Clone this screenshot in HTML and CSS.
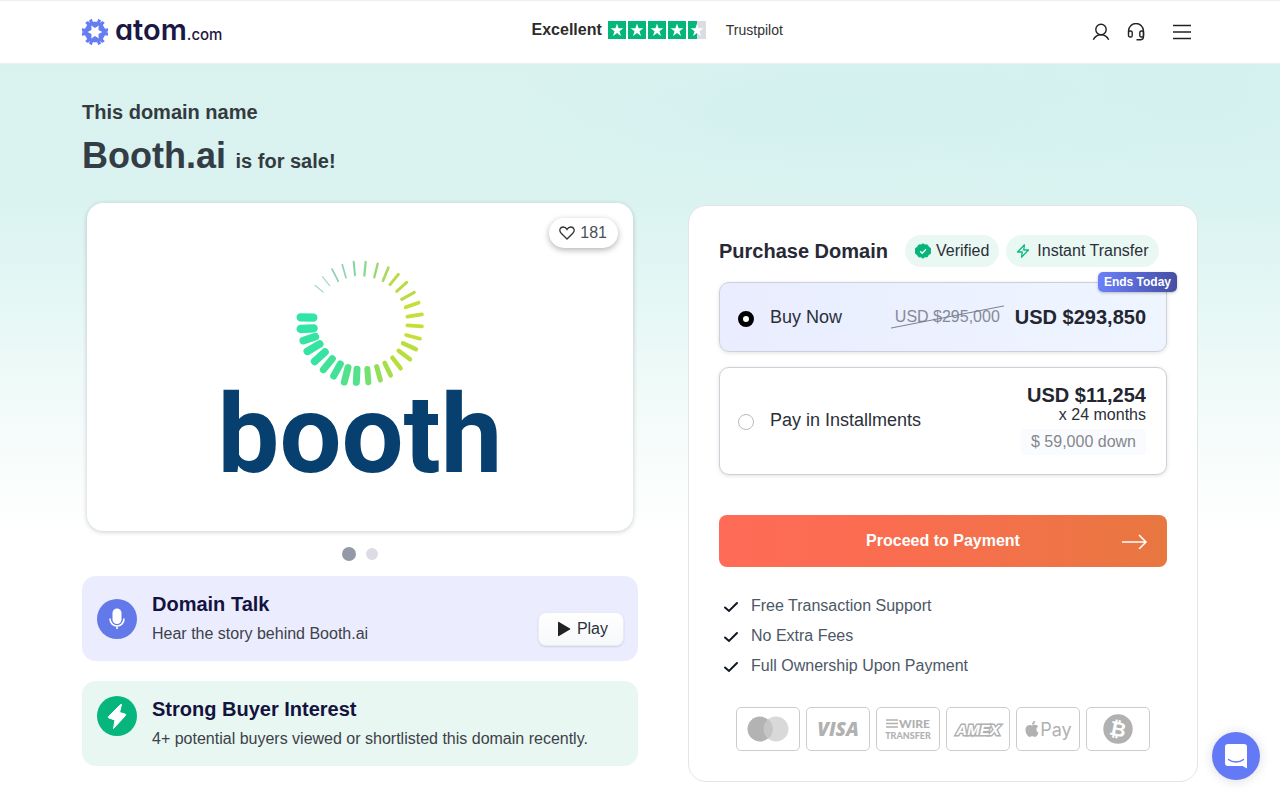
FILE: index.html
```html
<!DOCTYPE html>
<html lang="en">
<head>
<meta charset="utf-8">
<meta name="viewport" content="width=device-width, initial-scale=1">
<title>Booth.ai is for sale</title>
<link rel="stylesheet" href="styles.css">
</head>
<body>
<header class="site-header">
  <div class="container header-row">
    <a class="brand" href="#" aria-label="atom.com">
      <svg class="brand-mark" viewBox="-14 -14 28 28" width="28" height="28" fill="#667cf3" aria-hidden="true">
        <defs><path id="petal" d="M-6-11.600-4.600-7 0-4 4.600-7 6-11.600 3.200-13.200 2.200-10.300H-2.200L-3.200-13.200Z"/></defs>
        <use href="#petal"/><use href="#petal" transform="rotate(60)"/><use href="#petal" transform="rotate(120)"/>
        <use href="#petal" transform="rotate(180)"/><use href="#petal" transform="rotate(240)"/><use href="#petal" transform="rotate(300)"/>
      </svg>
      <span class="brand-name">atom</span><span class="brand-tld">.com</span>
    </a>
    <div class="trust">
      <strong>Excellent</strong>
      <svg class="stars" viewBox="0 0 98 18" width="98" height="18" role="img" aria-label="4.5 stars">
        <defs><path id="star" d="M9 2.600 10.600 7.300H15.400L11.500 10.200 13 15 9 12.100 5 15 6.500 10.200 2.600 7.300H7.400Z" fill="#fff"/></defs>
        <path fill="#04b67a" d="M0 0h18v18H0zM20 0h18v18H20zM40 0h18v18H40zM60 0h18v18H60zM80 0h9v18h-9z"/>
        <path fill="#dcdce6" d="M89 0h9v18h-9z"/>
        <use href="#star"/><use href="#star" x="20"/><use href="#star" x="40"/><use href="#star" x="60"/><use href="#star" x="80"/>
      </svg>
      <a class="trust-link" href="#">Trustpilot</a>
    </div>
    <nav class="tools" aria-label="Account">
      <button class="icon-button" aria-label="Account">
        <svg viewBox="0 0 18 18" width="18" height="18"><circle cx="9" cy="6.500" r="5.200"/><path d="M1.300 16.800C2.800 13.500 5.500 11.700 9 11.700s6.200 1.800 7.700 5.100"/></svg>
      </button>
      <button class="icon-button" aria-label="Support">
        <svg viewBox="0 0 18 18" width="18" height="18"><path d="M1.500 9.500V8a7.200 7.200 0 0 1 15 0v5.500c0 2-1.300 3.200-3.200 3.200H9.500"/><rect x="1.500" y="8" width="3.700" height="6" rx="1.600"/><rect x="12.800" y="8" width="3.700" height="6" rx="1.600"/></svg>
      </button>
      <button class="icon-button menu" aria-label="Menu">
        <svg viewBox="0 0 20 18" width="20" height="18"><path d="M1 2.500h18M1 9h18M1 15.500h18"/></svg>
      </button>
    </nav>
  </div>
</header>

<main class="container">
  <h1 class="headline">
    <span class="lead">This domain name</span>
    <span><span class="domain">Booth.ai</span> <span class="tail">is for sale!</span></span>
  </h1>

  <div class="columns">
    <section class="showcase">
      <div class="logo-card">
        <button class="likes" aria-label="181 likes">
          <svg viewBox="0 0 16 14" width="16" height="14" aria-hidden="true"><path d="M8 13 2.200 7.300C-.5 4.300 1.200 1 4.200 1 6 1 7.200 2 8 3.400 8.800 2 10 1 11.800 1c3 0 4.700 3.300 2 6.300Z"/></svg>
          <span>181</span>
        </button>
        <svg class="burst" viewBox="285 58 390 384" width="130" height="128" fill="none" stroke-linecap="round" aria-hidden="true">
          <g stroke="#30e5a6" stroke-width="25"><path d="M340 234 302 233M341 266 302 268"/></g>
          <g stroke="#35e4a2" stroke-width="23"><path d="M346 291 310 303M359 313 322 335M375 337 344 365"/></g>
          <g stroke="#40e298" stroke-width="21"><path d="M397 357 370 390M421 373 401 409"/></g>
          <g stroke="#54e18c" stroke-width="21"><path d="M444 384 433 427M471 389 469 428"/></g>
          <path stroke="#74e06f" stroke-width="18" d="M502 388 505 428"/>
          <path stroke="#92df58" stroke-width="15" d="M530 381 541 421"/>
          <path stroke="#a6de4a" stroke-width="14" d="M554 370 572 407"/>
          <g stroke="#b8de3c" stroke-width="13"><path d="M577 354 602 386M596 333 630 359M609 311 648 329"/></g>
          <g stroke="#c4df35" stroke-width="11"><path d="M618 286 660 297M622 257 666 260M622 231 666 224M617 203 656 189"/></g>
          <g stroke="#badb43" stroke-width="9"><path d="M605 179 643 158M590 155 620 128M570 135 595 104"/></g>
          <path stroke="#a9d95f" stroke-width="8" d="M549 123 565 84"/>
          <path stroke="#99d776" stroke-width="7" d="M523 113 533 72"/>
          <path stroke="#8cd990" stroke-width="7" d="M493 108 497 67"/>
          <path stroke="#86d4a2" stroke-width="6" d="M465 107 461 66"/>
          <path stroke="#8dd3b0" stroke-width="5" d="M438 114 427 75M415 125 396 88"/>
          <path stroke="#a9dcc7" stroke-width="4" d="M389 138 367 111M369 157 345 137"/>
        </svg>
        <div class="wordmark">booth</div>
      </div>
      <div class="dots">
        <button class="dot active" aria-label="Slide 1"></button>
        <button class="dot" aria-label="Slide 2"></button>
      </div>
      <article class="info talk">
        <svg class="info-icon" viewBox="0 0 40 40" width="40" height="40" aria-hidden="true"><circle cx="20" cy="20" r="20" fill="#6379ea"/><rect x="15.500" y="9.500" width="9" height="15.500" rx="4.500" fill="#fff"/><path d="M13 19.500c0 10 14 10 14 0M20 27v3" fill="none" stroke="#fff" stroke-width="1.600"/></svg>
        <div class="info-text"><h2>Domain Talk</h2><p>Hear the story behind Booth.ai</p></div>
        <button class="play"><svg viewBox="0 0 14 16" width="14" height="16" aria-hidden="true"><path d="M1 1.500v13q0 1 1 .5L13 8.600q.8-.6 0-1.200L2 1Q1 .5 1 1.500Z"/></svg>Play</button>
      </article>
      <article class="info interest">
        <svg class="info-icon" viewBox="0 0 40 40" width="40" height="40" aria-hidden="true"><circle cx="20" cy="20" r="20" fill="#06b67c"/><path d="M23.500 8.500 11.500 20.500q-1 1 .5 1.500l6 2-1.500 8.500L28.500 19.500q.8-1-.5-1.500l-5.500-1.500L24.500 8.500Z" fill="#fff" stroke="#fff" stroke-linejoin="round"/></svg>
        <div class="info-text"><h2>Strong Buyer Interest</h2><p>4+ potential buyers viewed or shortlisted this domain recently.</p></div>
      </article>
    </section>

    <form class="purchase">
      <div class="purchase-head">
        <h2>Purchase Domain</h2>
        <div class="pills">
          <span class="pill"><svg viewBox="0 0 16 16" width="16" height="16" aria-hidden="true"><path fill="#07b47b" stroke="#07b47b" stroke-linejoin="round" d="M8 .8 10 2l2.400-.1 1.100 2.100 2 1.300L15.400 8l.1 2.500-2.100 1.200-1.200 2.200-2.400-.1L8 15.200l-2-1.400-2.400.1-1.100-2.200L.5 10.500.6 8 .5 5.400l2.100-1.300L3.700 1.900 6 2Z"/><path d="m5.200 8.300 2 2 3.800-4" fill="none" stroke="#fff" stroke-width="1.300"/></svg>Verified</span>
          <span class="pill transfer"><svg viewBox="0 0 16 16" width="16" height="16" aria-hidden="true"><path d="M9.500 1.800 2.500 9H7.300L6.500 14.200 13.500 7H8.700Z" fill="none" stroke="#10b981" stroke-width="1.300" stroke-linejoin="round"/></svg>Instant Transfer</span>
        </div>
      </div>

      <label class="option selected">
        <input type="radio" name="plan" checked>
        <span class="option-name">Buy Now</span>
        <span class="price-row">
          <span class="old-price">USD $295,000<svg class="slash" viewBox="0 0 113 26" preserveAspectRatio="none" aria-hidden="true"><path d="M0 25 113 1"/></svg></span>
          <strong>USD $293,850</strong>
        </span>
        <span class="badge">Ends Today</span>
      </label>

      <label class="option installments">
        <input type="radio" name="plan">
        <span class="option-name">Pay in Installments</span>
        <span class="price-stack"><strong>USD $11,254</strong><span>x 24 months</span><span class="down">$ 59,000 down</span></span>
      </label>

      <button class="proceed" type="button">
        <span>Proceed to Payment</span>
        <svg viewBox="0 0 27 16" width="27" height="16" aria-hidden="true"><path d="M1 9h24M18 2l7 7-7 7"/></svg>
      </button>

      <ul class="benefits">
        <li><svg viewBox="0 0 16 14" width="16" height="14" aria-hidden="true"><path d="m2 8.500 4 3.500L14 4"/></svg>Free Transaction Support</li>
        <li><svg viewBox="0 0 16 14" width="16" height="14" aria-hidden="true"><path d="m2 8.500 4 3.500L14 4"/></svg>No Extra Fees</li>
        <li><svg viewBox="0 0 16 14" width="16" height="14" aria-hidden="true"><path d="m2 8.500 4 3.500L14 4"/></svg>Full Ownership Upon Payment</li>
      </ul>

      <div class="methods">
        <span class="method" aria-label="Mastercard"><svg viewBox="0 0 42 26" width="42" height="26"><circle cx="29" cy="13" r="12.500" fill="#d9d9d9"/><circle cx="13" cy="13" r="12.500" fill="#b3b3b3"/><path d="M21 3.400a12.500 12.500 0 0 1 0 19.200 12.500 12.500 0 0 1 0-19.200Z" fill="#c6c6c6"/></svg></span>
        <span class="method visa">VISA</span>
        <span class="method wire"><span class="wire-top"><svg viewBox="0 0 12 9" width="12" height="9" aria-hidden="true"><path d="M0 1h12M0 4.500h12M0 8h12" stroke="#b1b1b1" stroke-width="1.500"/></svg>WIRE</span><span class="wire-bottom">TRANSFER</span></span>
        <span class="method"><svg viewBox="0 0 54 20" width="54" height="20"><text class="amex" x="27" y="16" text-anchor="middle">AMEX</text></svg></span>
        <span class="method pay"><svg viewBox="0 0 24 24" width="16" height="16" fill="#b1b1b1" aria-hidden="true"><path d="M12.152 6.896c-.948 0-2.415-1.078-3.960-1.040-2.040.027-3.910 1.183-4.961 3.014-2.117 3.675-.546 9.103 1.519 12.090 1.013 1.454 2.208 3.090 3.792 3.039 1.520-.065 2.090-.987 3.935-.987 1.831 0 2.350.987 3.960.948 1.637-.026 2.676-1.480 3.676-2.948 1.156-1.688 1.636-3.325 1.662-3.415-.039-.013-3.182-1.221-3.220-4.857-.026-3.040 2.480-4.494 2.597-4.559-1.429-2.090-3.623-2.324-4.390-2.376-2-.156-3.675 1.090-4.610 1.090zM15.530 3.830c.843-1.012 1.400-2.427 1.245-3.830-1.207.052-2.662.805-3.532 1.818-.780.896-1.454 2.338-1.273 3.714 1.338.104 2.715-.688 3.559-1.701"/></svg>Pay</span>
        <span class="method"><svg viewBox="0 0 30 30" width="30" height="30"><circle cx="15" cy="15" r="14.700" fill="#b1b1b1"/><text class="coin" x="15" y="22" text-anchor="middle" transform="rotate(12 15 15)">₿</text></svg></span>
      </div>
    </form>
  </div>
</main>

<button class="chat" aria-label="Open chat">
  <svg viewBox="0 0 22 25" width="22" height="25" aria-hidden="true"><path d="M3 0h16a3 3 0 0 1 3 3v21.500L17.500 22H3a3 3 0 0 1-3-3V3a3 3 0 0 1 3-3Z" fill="#fff"/><path d="M3.500 15.500c4 3.300 11 3.300 15 0" fill="none" stroke="#6379f5" stroke-width="1.400" stroke-linecap="round"/></svg>
</button>
</body>
</html>
```

FILE: styles.css
```css
* { box-sizing: border-box; }

body {
  margin: 0;
  min-height: 100vh;
  color: #2b2f38;
  font: 16px/24px "Liberation Sans", Arial, sans-serif;
  background:
    radial-gradient(ellipse 360px 90px at 850px 110px, rgba(207, 240, 240, .6), transparent),
    radial-gradient(ellipse 300px 160px at 1190px 90px, rgba(209, 241, 240, .6), transparent),
    linear-gradient(#d9f2ee 64px, #daf3f1 200px, #e8f8f6 330px, #f6fcfb 440px, #fff 540px);
  background-color: #fff;
}

button { font: inherit; color: inherit; border: 0; padding: 0; cursor: pointer; }
h1, h2, p, ul { margin: 0; padding: 0; }
svg { display: block; flex: none; }

.container { max-width: 1140px; margin: 0 auto; padding: 0 12px; }

.site-header { background: #fff; border-top: 1px solid #eee; border-bottom: 1px solid #eee; }
.header-row { display: flex; align-items: center; justify-content: space-between; height: 62px; }
.brand { display: flex; align-items: baseline; color: #1c1844; text-decoration: none; line-height: 32px; }
.brand-mark { align-self: center; margin-right: 6px; margin-left: -1px; }
.brand-name { font-family: Inter, sans-serif; font-size: 29px; font-weight: 600; font-feature-settings: "cv11"; }
.brand-tld { font-family: Inter, sans-serif; font-size: 15px; font-weight: 500; }
.trust { display: flex; align-items: center; padding-bottom: 4px; }
.trust strong { color: #2c2c2c; margin-right: 6px; }
.trust-link { margin-left: 20px; font-size: 14px; color: #333; text-decoration: none; }
.tools { display: flex; align-items: center; gap: 17px; padding-right: 6px; }
.icon-button { background: none; }
.icon-button svg { fill: none; stroke: #222; stroke-width: 1.4; }
.menu { margin-left: 10px; }

.headline { padding-top: 36px; color: #343c46; font-size: 20px; line-height: 24px; }
.headline > span { display: block; }
.domain { font-size: 36px; line-height: 56px; margin-right: 4px; }
.lead, .tail { color: #343a40; }
.lead + span { line-height: 56px; margin-top: 4px; }

.columns { display: grid; grid-template-columns: 556fr 510fr; gap: 50px; align-items: start; padding-top: 14px; padding-bottom: 18px; }
.showcase { min-width: 0; }
.logo-card {
  position: relative;
  display: flex;
  flex-direction: column;
  align-items: center;
  margin: 0 5px;
  padding: 56px 16px 48px;
  background: #fff;
  border-radius: 16px;
  box-shadow: 0 1px 5px rgba(0, 0, 0, .2);
}
.wordmark { color: #07406f; font: 700 110px/96px Roboto, sans-serif; }
.likes {
  position: absolute;
  top: 15px;
  right: 15px;
  display: flex;
  align-items: center;
  gap: 5px;
  padding: 3px 11px 3px 10px;
  background: #fff;
  color: #4b4f58;
  border-radius: 16px;
  box-shadow: 0 2px 6px rgba(0, 0, 0, .3);
}
.likes svg { fill: none; stroke: #333; stroke-width: 1.3; }

.dots { display: flex; align-items: center; justify-content: center; gap: 10px; height: 45px; }
.dot { width: 12px; height: 12px; border-radius: 50%; background: #dcdde4; }
.dot.active { width: 14px; height: 14px; background: #9499a8; }

.info { display: flex; gap: 15px; padding: 15px 14px 15px 15px; border-radius: 14px; }
.info + .info { margin-top: 20px; }
.talk { background: #ebedff; }
.interest { background: #e8f7f2; }
.talk .info-icon { align-self: center; }
.info-text { flex: 1; min-width: 0; }
.info h2 { color: #14133f; font-size: 20px; line-height: 26px; }
.info p { color: #3d4148; line-height: 24px; padding-top: 5px; }
.play {
  display: flex;
  align-items: center;
  align-self: flex-end;
  gap: 6px;
  padding: 4px 15px 4px 18px;
  background: linear-gradient(#fff, #f7f8fa);
  border: 1px solid #e9eaf2;
  border-radius: 8px;
  box-shadow: 0 1px 2px rgba(0, 0, 0, .12);
}
.play svg { fill: #222; }

.purchase { min-width: 0; margin-top: 2px; padding: 29px 30px 30px; background: #fff; border: 1px solid #e2e4e6; border-radius: 18px; }
.purchase-head { display: flex; align-items: center; flex-wrap: wrap; gap: 17px; }
.purchase-head h2 { font-size: 20px; color: #272935; }
.pills { display: flex; gap: 7px; }
.pill { display: flex; align-items: center; gap: 5px; padding: 4px 10px; border-radius: 16px; background: #e9f8f2; }
.transfer { gap: 6px; padding-left: 9px; }

.option {
  position: relative;
  display: flex;
  align-items: center;
  margin-top: 15px;
  padding: 14px 20px 14px 18px;
  min-height: 70px;
  background: #fff;
  border: 1px solid #cdd0d8;
  border-radius: 10px;
  box-shadow: 0 1px 4px rgba(0, 0, 0, .12);
}
.option.selected { background: linear-gradient(90deg, #e9edff, #eef5ff); }
.option.installments { padding-top: 17px; padding-bottom: 19px; }
.option input { appearance: none; width: 16px; height: 16px; margin: 4px 16px 0 0; border: 1px solid #bbb; border-radius: 50%; background: #fff; }
.option input:checked { border: 5px solid #000; }
.option-name { flex: 1; font-size: 18px; }
.option strong { font-size: 20px; color: #23252f; }
.price-row { display: flex; align-items: center; gap: 15px; }
.old-price { position: relative; color: #868a97; }
.slash { position: absolute; left: -4px; top: 0; width: calc(100% + 8px); height: 100%; fill: none; stroke: #777c88; }
.badge {
  position: absolute;
  top: -11px;
  right: -11px;
  padding: 0 6px;
  color: #fff;
  font-size: 12px;
  font-weight: 700;
  line-height: 20px;
  background: linear-gradient(90deg, #6b80fa, #454ea3);
  border-radius: 5px;
  box-shadow: 0 1px 3px rgba(0, 0, 0, .25);
}
.price-stack { display: flex; flex-direction: column; align-items: flex-end; line-height: 20px; }
.down { margin-top: 4px; padding: 3px 10px; color: #85878c; background: #fafbff; border-radius: 4px; }

.proceed {
  display: grid;
  grid-template-columns: 27px 1fr 27px;
  align-items: center;
  width: 100%;
  margin-top: 40px;
  padding: 14px 19px;
  color: #fff;
  font-weight: 700;
  background: linear-gradient(90deg, #ff6b57, #fa6d50 40%, #e87740);
  border-radius: 8px;
}
.proceed span { grid-column: 2; }
.proceed svg { fill: none; stroke: #fff; stroke-width: 1.5; }

.benefits { margin-top: 24px; list-style: none; color: #4c5866; line-height: 30px; }
.benefits li { display: flex; align-items: center; gap: 12px; padding-left: 4px; }
.benefits svg { fill: none; stroke: #111722; stroke-width: 2; stroke-linecap: round; }

.methods { display: flex; flex-wrap: wrap; justify-content: center; gap: 6px; margin-top: 26px; }
.method { display: flex; align-items: center; justify-content: center; width: 64px; height: 44px; border: 1px solid #ccc; border-radius: 5px; color: #b1b1b1; }
.visa { font: italic 900 19px "Open Sans", sans-serif; }
.wire { flex-direction: column; font-family: Lato, sans-serif; font-weight: 900; }
.wire-top { display: flex; align-items: center; gap: 1px; font-size: 12px; line-height: 12px; }
.wire-bottom { font-size: 9px; line-height: 11px; }
.amex { font: italic 900 15px "Liberation Sans", sans-serif; fill: #fff; stroke: #b1b1b1; stroke-width: 3px; paint-order: stroke; }
.pay { font: 400 18px Inter, sans-serif; }
.coin { font: 700 20px "DejaVu Sans", sans-serif; fill: #fff; }

.chat {
  position: fixed;
  right: 20px;
  bottom: 20px;
  display: flex;
  align-items: center;
  justify-content: center;
  width: 48px;
  height: 48px;
  border-radius: 50%;
  background: #6379f5;
  box-shadow: 0 1px 12px rgba(0, 0, 0, .14);
}

@media (max-width: 960px) {
  .columns { grid-template-columns: 1fr; gap: 24px; }
}
```
